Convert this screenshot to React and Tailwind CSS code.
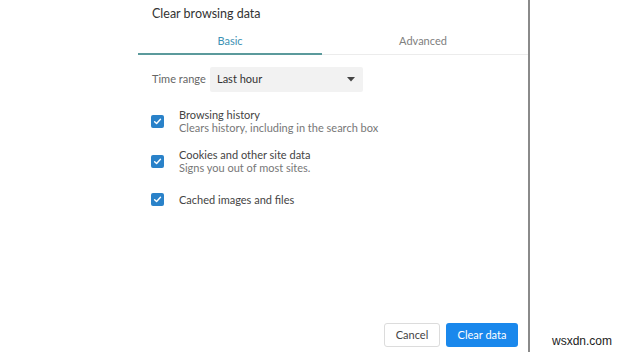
import React from "react";

function Check() {
  return (
    <span className="flex h-[13px] w-[13px] shrink-0 items-center justify-center rounded-[2px] bg-[#2a82c9]">
      <svg width="9" height="9" viewBox="0 0 10 10" fill="none">
        <path d="M1.8 5.2 L4 7.3 L8.3 2.6" stroke="white" strokeWidth="1.6" strokeLinecap="round" strokeLinejoin="round" />
      </svg>
    </span>
  );
}

export default function App() {
  return (
    <div className="relative flex h-[352px] w-[624px] bg-white text-[#333]" style={{ fontFamily: 'Lato, "Noto Sans", sans-serif' }}>
      <div className="ml-[138px] flex h-full w-[392px] flex-col border-r-[2px] border-[#8a8a8a]">
        <div className="pl-[14px] pt-[5px] text-[12.5px] leading-[18px] text-[#333]">Clear browsing data</div>
        <div className="mt-[11px] flex h-[21px] border-b border-[#ececec] text-[11px] leading-[14px]">
          <div className="-mb-[1px] flex w-[184px] justify-center border-b-[2px] border-[#5b9a9c] text-[#3d92b4]">Basic</div>
          <div className="flex flex-1 justify-center pr-[4px] text-[#808080]">Advanced</div>
        </div>
        <div className="mt-[12px] flex items-center pl-[14px] text-[11px]">
          <span className="w-[58px] whitespace-nowrap text-[#666]">Time range</span>
          <div className="flex h-[25px] w-[153px] items-center justify-between rounded-[2px] bg-[#f2f2f2] pl-[7px] pr-[8px] text-[#333]">
            <span>Last hour</span>
            <svg width="8" height="5" viewBox="0 0 8 5"><path d="M0 0 H8 L4 4.5 Z" fill="#444" /></svg>
          </div>
        </div>
        <div className="mt-[16px] flex flex-col gap-[14px] pl-[13px] text-[11px] leading-[13px]">
          <div className="flex items-center gap-[15px]">
            <Check />
            <div>
              <div className="text-[#444]">Browsing history</div>
              <div className="text-[#777]">Clears history, including in the search box</div>
            </div>
          </div>
          <div className="flex items-center gap-[15px]">
            <Check />
            <div>
              <div className="text-[#444]">Cookies and other site data</div>
              <div className="text-[#777]">Signs you out of most sites.</div>
            </div>
          </div>
          <div className="mt-[5px] flex items-center gap-[15px]">
            <Check />
            <div className="text-[#444]">Cached images and files</div>
          </div>
        </div>
        <div className="mt-auto mb-[5px] flex justify-end gap-[6px] pr-[10px] text-[11px]">
          <button className="h-[24px] w-[56px] rounded-[3px] border border-[#dcdcdc] bg-white text-[#444]">Cancel</button>
          <button className="h-[24px] w-[72px] rounded-[3px] bg-[#1a88ec] text-white">Clear data</button>
        </div>
      </div>
      <div className="absolute bottom-[2px] right-[12px] text-[12px] text-[#222]" style={{ fontFamily: '"Liberation Sans", sans-serif' }}>wsxdn.com</div>
    </div>
  );
}
